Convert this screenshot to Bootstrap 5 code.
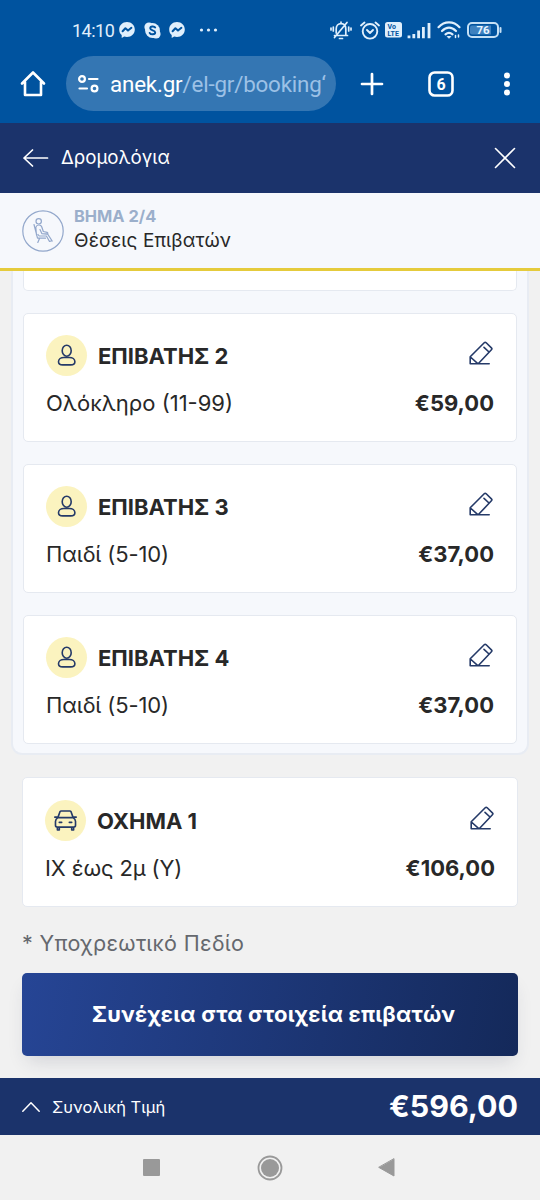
<!DOCTYPE html>
<html lang="el">
<head>
<meta charset="utf-8">
<meta name="viewport" content="width=device-width, initial-scale=1">
<title>ANEK – Θέσεις Επιβατών</title>
<link href="https://cdn.jsdelivr.net/npm/bootstrap@5.3.0/dist/css/bootstrap.min.css" rel="stylesheet">
<style>
  body { font-family: Inter, "Liberation Sans", sans-serif; background: #f1f1f1; color: #282828; height: 1200px; overflow: hidden; }
  svg { display: block; flex: none; fill: none; stroke-linecap: round; stroke-linejoin: round; overflow: visible; }
  .txt { white-space: nowrap; line-height: 1; }
  .chrome { background: #00539f; height: 123px; font-family: Roboto, sans-serif; color: #fff; }
  .status { height: 60px; padding: 0 38px 0 72px; color: #e0effc; }
  .clock { font-size: 18px; width: 43px; letter-spacing: -.5px; padding-top: 1px; }
  .toolbar { height: 55px; margin-top: -4px; }
  .url { width: 270px; height: 55px; background: #3476b3; border-radius: 28px; margin-left: 20px; padding: 1px 10px 0 12px; font-size: 22.400px; letter-spacing: -.2px; }
  .url-text { line-height: 30px; margin-left: 11px; }
  .url-text span { color: #9cc1e6; }
  .page-head { background: #1b336b; height: 70px; color: #fff; padding: 0 25px 0 23px; }
  .page-head .txt { font-size: 18.700px; margin-left: 12px; }
  .step { background: #f6f8fc; height: 78px; border-bottom: 3px solid #e5cb3c; padding: 0 22px; }
  .step-no { color: #9bafcb; font-size: 16.400px; font-weight: 700; }
  .step-name { font-size: 19px; margin-top: 6px; padding-bottom: 3px; letter-spacing: .1px; }
  .group { margin: 0 11px; height: 484px; background: #f6f8fc; border: 2px solid #e8ecf3; border-top: 0; border-radius: 0 0 11px 11px; padding: 0 10px; }
  .box { background: #fff; border: 1px solid #e5e9f0; border-radius: 5px; height: 129px; margin-bottom: 22px; padding: 21px 22px 0; }
  .box-tail { height: 20px; border-top: 0; border-radius: 0 0 5px 5px; padding: 0; }
  .vehicle { margin: 22px 22px 0; height: 130px; padding: 22px 22px 0; }
  .pen { margin: -6px 1px 0 0; }
  .disc { width: 41px; height: 41px; background: #fbf3bf; border-radius: 50%; }
  .name { font-size: 22px; font-weight: 700; margin-left: 11px; }
  .fare { font-size: 22px; margin-top: 16px; }
  .tight { letter-spacing: -.13px; }
  .note { font-size: 21.500px; letter-spacing: .33px; color: #65686e; margin: 26px 0 0 22px; height: 40px; }
  .go { margin: 0 22px; width: 496px; height: 83px; border: 0; border-radius: 5px; color: #fff; font-size: 22px; letter-spacing: .22px; padding: 0 3px 1px 10px; font-weight: 700; background: linear-gradient(100deg, #264595, #14295a); box-shadow: 0 10px 18px -6px rgba(40,50,80,.17); }
  .total { background: #1b336b; color: #fff; height: 57px; margin-top: 22px; padding: 0 22px; position: relative; }
  .total-label { font-size: 16.500px; margin-left: 12px; padding-top: 1px; }
  .total-sum { font-size: 30.400px; font-weight: 700; }
  .sysnav { height: 65px; padding-left: 143px; }
</style>
</head>
<body>
<svg width="0" height="0" class="position-absolute">
  <symbol id="pen" viewBox="0 0 24 24"><path d="M1.200 22.800V15.800L15.200 1.800Q16.200.800 17.200 1.800L22.400 6.800Q23.400 7.800 22.400 8.800L9.200 22.800ZM1.400 16l7.400 6.700M15 6.300l5 4.700M1.200 22.800H20.200"/></symbol>
  <symbol id="person" viewBox="0 0 20 24"><ellipse cx="9.700" cy="6.700" rx="4.500" ry="5.500"/><path d="M6.900 13.500H12.500C15.500 13.500 17.900 15.200 17.900 17.700S16.300 20.900 13.700 20.900H5.700C3.100 20.900 1.500 20.200 1.500 17.700S3.900 13.500 6.900 13.500Z"/></symbol>
  <symbol id="messenger" viewBox="0 0 16 16"><path fill="#e0effc" d="M8 0C3.500 0 .2 3.300.2 7.500c0 2.300.9 4.200 2.500 5.600V16l2.500-1.400c.9.300 1.800.4 2.800.4 4.500 0 7.800-3.200 7.800-7.500S12.500 0 8 0Z"/><path stroke="#00539f" stroke-width="2" d="m3.600 9.300 2.800-3 2.600 2.300 3.400-2.800"/></symbol>
</svg>

<header class="chrome">
  <div class="status d-flex align-items-center">
    <span class="clock txt">14:10</span>
    <svg width="16" height="16" style="margin-left:4px"><use href="#messenger"/></svg>
    <svg width="17" height="17" viewBox="0 0 17 17" style="margin-left:9px"><circle cx="8.500" cy="8.500" r="7.400" fill="#e0effc"/><circle cx="5" cy="5" r="4.600" fill="#e0effc"/><circle cx="12" cy="12" r="4.600" fill="#e0effc"/><path stroke="#00539f" stroke-width="1.900" d="M11.200 5.500C10.300 4 6.200 4 6.200 6.300c0 2.500 5 1.600 5 4.200 0 2.300-4.400 2.300-5.500.400"/></svg>
    <svg width="16" height="16" style="margin-left:8px"><use href="#messenger"/></svg>
    <svg width="20" height="4" viewBox="0 0 20 4" style="margin-left:14px;fill:#e0effc"><circle cx="2.500" cy="2" r="1.600"/><circle cx="9.500" cy="2" r="1.600"/><circle cx="16.500" cy="2" r="1.600"/></svg>
    <svg class="ms-auto" width="22" height="20" viewBox="0 0 22 20" stroke="#e0effc" stroke-width="1.700"><path d="M4.500 15.500h13M6.200 13V9c0-3.200 2-5.300 4.800-5.300S15.800 5.800 15.800 9v5.500M11 3V2M9.500 18.500h3M4.500 17.500 17 2.500M3.300 7v4M1 8v2M18.700 7v4M21 8v2"/></svg>
    <svg width="20" height="19" viewBox="0 0 20 19" stroke="#e0effc" stroke-width="1.900" style="margin-left:8px"><circle cx="10" cy="10.300" r="7.300"/><path d="m7 9 3 3 3-3M1 4.500 4.500 1.500M19 4.500 15.500 1.500"/></svg>
    <svg width="17" height="16" viewBox="0 0 17 16" style="margin-left:5px"><rect width="17" height="15.500" rx="2.500" fill="#e0effc"/><text x="2.600" y="7.200" font-family="Roboto" font-size="7" font-weight="700" fill="#00539f">Vo</text><text x="2.600" y="13.800" font-family="Roboto" font-size="7" font-weight="700" fill="#00539f">LTE</text></svg>
    <svg width="24" height="17" viewBox="0 0 24 17" stroke="#e0effc" stroke-width="2.800" style="margin-left:5px;stroke-linecap:butt"><path d="M2 13.500V16.200M6.800 12v4.200M11.600 8.500v7.700M16.400 5v11.200M22 1v15.200"/></svg>
    <svg width="24" height="18" viewBox="0 0 24 18" stroke="#e0effc" stroke-width="2.200" style="margin-left:6px"><path d="M1.500 6.200C7.500-.2 16.500-.2 22.500 6.200M5 10c4.500-4.500 9.500-4.500 14 0M8.500 13.300c2.300-2 4.700-2 7 0"/><path d="m10.500 15.800 1.500 1.500 1.500-1.500Z" fill="#e0effc" stroke-width="1"/><path d="M18.500 14.500v2M21.500 14v2" stroke-width="1.500"/></svg>
    <svg width="35" height="16" viewBox="0 0 35 16" style="margin-left:6px"><rect x="1" y="1" width="30" height="14" rx="4" stroke="#c5e0f5" stroke-width="2"/><path d="M5 3.500h19v9H5q-2 0-2-2v-5q0-2 2-2" fill="#3d81bf"/><path d="M33.500 6v4" stroke="#c5e0f5" stroke-width="2"/><text x="9.500" y="12.200" font-family="Roboto" font-size="11.500" font-weight="700" fill="#e9f5ff">76</text></svg>
  </div>
  <div class="toolbar d-flex align-items-center">
    <svg width="26" height="27" viewBox="0 0 26 27" stroke="#fff" stroke-width="2.600" style="margin-left:20px"><path d="M2 13.500 13 2.500 24 13.500M5 12V25H21V12"/></svg>
    <div class="url d-flex align-items-center">
      <svg width="21" height="18" viewBox="0 0 21 18" stroke="#fff" stroke-width="2.200"><circle cx="4" cy="4" r="2.900"/><path d="M11 4h8.500M1.500 13.500H9"/><circle cx="16.500" cy="13.500" r="2.900"/></svg>
      <div class="url-text txt">anek.gr<span>/el-gr/booking‘</span></div>
    </div>
    <svg width="22" height="22" viewBox="0 0 22 22" stroke="#fff" stroke-width="2.700" style="margin-left:25px"><path d="M11 1v20M1 11h20"/></svg>
    <svg width="26" height="26" viewBox="0 0 26 26" style="margin-left:45px"><rect x="1.500" y="1.500" width="23" height="23" rx="5" stroke="#fff" stroke-width="2.600"/><text x="13" y="18.500" text-anchor="middle" font-family="Roboto" font-size="16" font-weight="700" fill="#fff">6</text></svg>
    <svg width="8" height="24" viewBox="0 0 8 24" style="margin-left:49px;fill:#fff"><circle cx="4" cy="3.500" r="3"/><circle cx="4" cy="12" r="3"/><circle cx="4" cy="20.500" r="3"/></svg>
  </div>
</header>

<nav class="page-head d-flex align-items-center">
  <svg width="26" height="18" viewBox="0 0 26 18" stroke="#fff" stroke-width="1.700"><path d="M24.500 9H1M9.500 1 1 9l8.500 8"/></svg>
  <span class="txt">Δρομολόγια</span>
  <svg class="ms-auto" width="20" height="20" viewBox="0 0 20 20" stroke="#fff" stroke-width="1.600"><path d="m.5.500 19 19M19.500.500l-19 19"/></svg>
</nav>

<section class="step d-flex align-items-center">
  <svg width="42" height="42" viewBox="0 0 42 42" stroke="#92a7cb" stroke-width="1.200"><circle cx="21" cy="21" r="20.200"/><circle cx="16.700" cy="11.300" r="2.700"/><path d="M12 14.500 15.500 28.200H23.500M17.500 28.500 15.800 32.500M14.500 25 13.800 17.500c.5-3 5-3.500 6-.500l1.500 4.500 3.800.8c1.200.4.900 1.900-.3 1.900l-5-.6-1.800-4M16 24.500l1.200 1.500h7.200L27.500 31.500l1.800-.6M20.500 23.800h5l4.700 7.200"/></svg>
  <div style="margin-left:10px">
    <div class="txt step-no">ΒΗΜΑ 2/4</div>
    <div class="txt step-name">Θέσεις Επιβατών</div>
  </div>
</section>

<main>
  <div class="group">
    <div class="box box-tail"></div>
    <div class="box">
      <div class="d-flex align-items-center">
        <div class="disc d-flex align-items-center justify-content-center"><svg width="20" height="24" stroke="#253a68" stroke-width="1.600"><use href="#person"/></svg></div>
        <span class="txt name">ΕΠΙΒΑΤΗΣ 2</span>
        <svg class="pen ms-auto" width="24" height="24" stroke="#253a68" stroke-width="1.600"><use href="#pen"/></svg>
      </div>
      <div class="fare d-flex justify-content-between"><span class="txt">Ολόκληρο (11-99)</span><b class="txt">€59,00</b></div>
    </div>
    <div class="box">
      <div class="d-flex align-items-center">
        <div class="disc d-flex align-items-center justify-content-center"><svg width="20" height="24" stroke="#253a68" stroke-width="1.600"><use href="#person"/></svg></div>
        <span class="txt name">ΕΠΙΒΑΤΗΣ 3</span>
        <svg class="pen ms-auto" width="24" height="24" stroke="#253a68" stroke-width="1.600"><use href="#pen"/></svg>
      </div>
      <div class="fare d-flex justify-content-between"><span class="txt tight">Παιδί (5-10)</span><b class="txt">€37,00</b></div>
    </div>
    <div class="box">
      <div class="d-flex align-items-center">
        <div class="disc d-flex align-items-center justify-content-center"><svg width="20" height="24" stroke="#253a68" stroke-width="1.600"><use href="#person"/></svg></div>
        <span class="txt name">ΕΠΙΒΑΤΗΣ 4</span>
        <svg class="pen ms-auto" width="24" height="24" stroke="#253a68" stroke-width="1.600"><use href="#pen"/></svg>
      </div>
      <div class="fare d-flex justify-content-between"><span class="txt tight">Παιδί (5-10)</span><b class="txt">€37,00</b></div>
    </div>
  </div>
  <div class="box vehicle">
    <div class="d-flex align-items-center">
      <div class="disc d-flex align-items-center justify-content-center"><svg width="23" height="21" viewBox="0 0 24 22" stroke="#253a68" stroke-width="1.700"><path d="M4 8 6.200 1.800Q6.600 1 7.600 1h8.800q1 0 1.400.8L20 8M4 8h16q2.500 1.500 2.500 4v4q0 2-2 2h-17q-2 0-2-2v-4Q1.500 9.500 4 8ZM.8 7.500H4M20 7.500h3.200M3.500 18.500V21H5.500V18.500M18.500 18.500V21h2V18.500M5.500 13h2.500M16 13h2.500"/></svg></div>
      <span class="txt name">ΟΧΗΜΑ 1</span>
      <svg class="pen ms-auto" width="24" height="24" stroke="#253a68" stroke-width="1.600"><use href="#pen"/></svg>
    </div>
    <div class="fare d-flex justify-content-between"><span class="txt tight">ΙΧ έως 2μ (Υ)</span><b class="txt">€106,00</b></div>
  </div>
  <div class="txt note">* Υποχρεωτικό Πεδίο</div>
  <button class="go txt d-block">Συνέχεια στα στοιχεία επιβατών</button>
</main>

<footer>
  <div class="total d-flex align-items-center">
    <svg width="18" height="10" viewBox="0 0 18 10" stroke="#fff" stroke-width="1.500"><path d="m.8 9.200 8.200-8.400 8.200 8.400"/></svg>
    <span class="txt total-label">Συνολική Τιμή</span>
    <b class="txt total-sum ms-auto">€596,00</b>
  </div>
  <div class="sysnav d-flex align-items-center">
    <svg width="17" height="17"><rect width="17" height="17" rx="1" fill="#999"/></svg>
    <svg width="26" height="26" viewBox="0 0 26 26" style="margin-left:97px"><circle cx="13" cy="13" r="11.500" stroke="#999" stroke-width="1.800"/><circle cx="13" cy="13" r="9" fill="#999"/></svg>
    <svg width="17" height="19" viewBox="0 0 17 19" style="margin-left:95px"><path d="M16 1v17L1 9.500Z" fill="#999" stroke="#999"/></svg>
  </div>
</footer>
<script src="https://cdn.jsdelivr.net/npm/bootstrap@5.3.0/dist/js/bootstrap.bundle.min.js"></script>
</body>
</html>
